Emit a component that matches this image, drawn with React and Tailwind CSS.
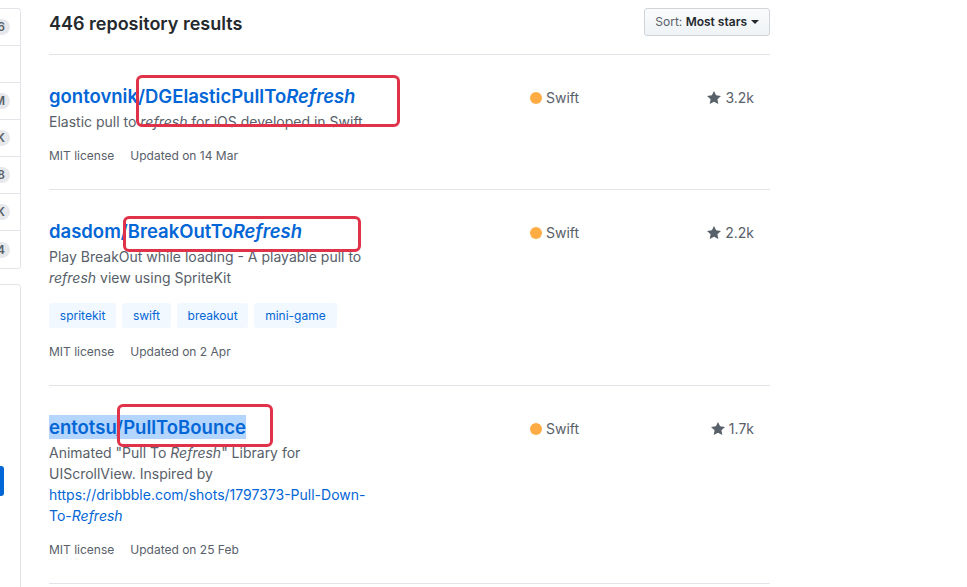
import React from "react";

function Star() {
  return (
    <svg width="14" height="16" viewBox="0 0 14 16" className="shrink-0 mr-[4px]" fill="#586069">
      <path d="M14 6l-4.9-.64L7 1 4.9 5.36 0 6l3.6 3.26L2.67 14 7 11.67 11.33 14l-.93-4.74L14 6z" />
    </svg>
  );
}

function Lang() {
  return (
    <div className="w-[120px] shrink-0 mt-[3px] flex items-center text-[14px] leading-[21px] text-[#586069]">
      <span className="ml-[1px] mr-[4px] w-[12px] h-[12px] rounded-full bg-[#ffac45] inline-block" />
      <span>Swift</span>
    </div>
  );
}

function Stars({ value }) {
  return (
    <div className="flex-1 mt-[3px] pr-[16px] flex items-center justify-end text-[14px] leading-[21px] text-[#586069]">
      <Star />
      <span>{value}</span>
    </div>
  );
}

function Meta({ date }) {
  return (
    <div className="mt-[15px] text-[12px] leading-[18px] text-[#586069] flex">
      <span className="mr-[16px]">MIT license</span>
      <span>Updated on {date}</span>
    </div>
  );
}

function Topic({ children }) {
  return (
    <span className="bg-[#f1f8ff] text-[#0366d6] rounded-[3px] px-[10.8px] py-[3.6px] text-[12px] leading-[18px]">
      {children}
    </span>
  );
}

function RedBox({ cls }) {
  return <div className={"absolute border-[3px] border-[#e03248] rounded-[6px] " + cls} />;
}

export default function App() {
  return (
    <div className="flex w-[967px] h-[587px] overflow-hidden bg-white [font-family:Inter,'Liberation_Sans',sans-serif] text-[#24292e]">
      {/* sidebar strip */}
      <div className="w-[21px] shrink-0 overflow-hidden flex flex-col">
        <div className="mt-[8px] ml-[-200px] w-[221px] shrink-0 border border-[#e1e4e8] rounded-[3px] bg-white">
          {["446", "", "1M", "15K", "8", "1K", "4"].map((c, i) => (
            <div
              key={i}
              className={
                "h-[37px] flex items-center justify-end pr-[10px] " +
                (i < 6 ? "border-b border-[#e1e4e8]" : "")
              }
            >
              {c && (
                <span className="h-[16px] px-[5px] rounded-[20px] bg-[#e6e8eb] text-[12px] leading-[16px] font-semibold text-[#586069]">
                  {c}
                </span>
              )}
            </div>
          ))}
        </div>
        <div className="mt-[15px] ml-[-200px] w-[221px] h-[400px] shrink-0 border border-[#e1e4e8] rounded-[3px] bg-white">
          <div className="mt-[181px] w-[203px] h-[30px] rounded-[3px] bg-[#0366d6]" />
        </div>
      </div>

      {/* main */}
      <div className="ml-[28px] w-[721px] shrink-0">
        <div className="flex justify-between items-start pt-[8px] pb-[15px] border-b border-[#e1e4e8]">
          <h3 className="mt-[1px] text-[18px] leading-[30px] font-semibold text-[#24292e]">
            446 repository results
          </h3>
          <button className="h-[28px] flex items-center px-[10px] border border-[#d1d5da] rounded-[3px] bg-linear-to-b from-[#fafbfc] to-[#eff3f6] text-[12px] leading-[20px]">
            <span className="text-[#586069]">Sort:&nbsp;</span>
            <span className="font-semibold text-[#24292e]">Most stars</span>
            <span className="ml-[4px] w-0 h-0 border-l-[4px] border-r-[4px] border-t-[4px] border-l-transparent border-r-transparent border-t-[#24292e]" />
          </button>
        </div>

        {/* item 1 */}
        <div className="relative flex items-start pt-[29px] pb-[24px] border-b border-[#e1e4e8]">
          <div className="w-[480px] shrink-0">
            <h3 className="text-[18.5px] leading-[25px] font-semibold text-[#0366d6]">
              gontovnik/DGElasticPullTo<em>Refresh</em>
            </h3>
            <p className="mt-[2px] w-[360px] text-[14px] leading-[21px] text-[#586069] whitespace-nowrap">
              Elastic pull to <em>refresh</em> for iOS developed in Swift
            </p>
            <Meta date="14 Mar" />
          </div>
          <Lang />
          <Stars value="3.2k" />
          <RedBox cls="left-[87px] top-[20px] w-[264px] h-[52px]" />
        </div>

        {/* item 2 */}
        <div className="relative flex items-start pt-[29px] pb-[24px] border-b border-[#e1e4e8]">
          <div className="w-[480px] shrink-0">
            <h3 className="text-[18.5px] leading-[25px] font-semibold text-[#0366d6]">
              dasdom/BreakOutTo<em>Refresh</em>
            </h3>
            <p className="mt-[2px] w-[360px] text-[14px] leading-[21px] text-[#586069] whitespace-nowrap">
              Play BreakOut while loading - A playable pull to
              <br />
              <em>refresh</em> view using SpriteKit
            </p>
            <div className="mt-[15px] flex gap-[6px]">
              <Topic>spritekit</Topic>
              <Topic>swift</Topic>
              <Topic>breakout</Topic>
              <Topic>mini-game</Topic>
            </div>
            <Meta date="2 Apr" />
          </div>
          <Lang />
          <Stars value="2.2k" />
          <RedBox cls="left-[74px] top-[26px] w-[238px] h-[36px]" />
        </div>

        {/* item 3 */}
        <div className="relative flex items-start pt-[29px] pb-[24px] border-b border-[#e1e4e8]">
          <div className="w-[480px] shrink-0">
            <h3 className="text-[18.5px] leading-[25px] font-semibold text-[#0366d6]">
              <span className="bg-[#b4d5fe] py-[1px]">entotsu/PullToBounce</span>
            </h3>
            <p className="mt-[2px] w-[360px] text-[14px] leading-[21px] text-[#586069] whitespace-nowrap">
              Animated "Pull To <em>Refresh</em>" Library for
              <br />
              UIScrollView. Inspired by
              <br />
              <span className="text-[#0366d6]">
                https://dribbble.com/shots/1797373-Pull-Down-
                <br />
                To-<em>Refresh</em>
              </span>
            </p>
            <Meta date="25 Feb" />
          </div>
          <Lang />
          <Stars value="1.7k" />
          <RedBox cls="left-[68px] top-[18px] w-[156px] h-[43px]" />
        </div>
      </div>
    </div>
  );
}
